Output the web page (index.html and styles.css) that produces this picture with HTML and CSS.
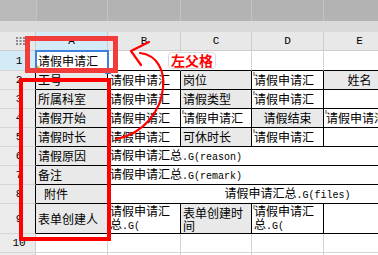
FILE: index.html
```html
<!DOCTYPE html>
<html lang="zh">
<head>
<meta charset="utf-8">
<title>sheet</title>
<link rel="stylesheet" href="styles.css">
</head>
<body>
<div class="page">
  <div class="topbar"><span class="tb0"></span><span class="tba"></span><span class="tbb"></span><span class="tbc"></span><span class="tbd"></span><span class="tbe"></span></div>
  <div class="band"></div>
  <table class="sheet">
    <colgroup>
      <col class="c-rh"><col class="c-a"><col class="c-b"><col class="c-c"><col class="c-d"><col class="c-e"><col class="c-f">
    </colgroup>
    <tr class="hdr">
      <th class="corner"><svg class="dots" width="10" height="8" viewBox="0 0 10 8"><rect x="0" y="0" width="2" height="2"/><rect x="3.5" y="0" width="2" height="2"/><rect x="7" y="0" width="2" height="2"/><rect x="0" y="3" width="2" height="2"/><rect x="3.5" y="3" width="2" height="2"/><rect x="7" y="3" width="2" height="2"/><rect x="0" y="6" width="2" height="2"/><rect x="3.5" y="6" width="2" height="2"/><rect x="7" y="6" width="2" height="2"/></svg></th>
      <th class="ch sel">A</th><th class="ch">B</th><th class="ch">C</th><th class="ch">D</th><th class="ch">E</th><th class="ch">F</th>
    </tr>
    <tr class="r1">
      <th class="rh sel">1</th>
      <td class="top">请假申请汇</td><td class="top"></td><td class="top"></td><td class="top"></td><td class="top"></td><td class="top"></td>
    </tr>
    <tr class="r">
      <th class="rh fl">2</th>
      <td class="f lab">工号</td><td class="f">请假申请汇</td><td class="f lab">岗位</td><td class="f v">请假申请汇</td><td class="f lab ctr">姓名</td><td class="f"></td>
    </tr>
    <tr class="r">
      <th class="rh fl">3</th>
      <td class="f lab">所属科室</td><td class="f">请假申请汇</td><td class="f lab">请假类型</td><td class="f v">请假申请汇</td><td class="f"></td><td class="f"></td>
    </tr>
    <tr class="r">
      <th class="rh fl">4</th>
      <td class="f lab">请假开始</td><td class="f">请假申请汇</td><td class="f v">请假申请汇</td><td class="f lab ctr">请假结束</td><td class="f v">请假申请汇</td><td class="f"></td>
    </tr>
    <tr class="r">
      <th class="rh fl">5</th>
      <td class="f lab">请假时长</td><td class="f">请假申请汇</td><td class="f lab">可休时长</td><td class="f v">请假申请汇</td><td class="f"></td><td class="f"></td>
    </tr>
    <tr class="r">
      <th class="rh fl">6</th>
      <td class="f lab">请假原因</td><td class="f" colspan="5">请假申请汇总<span class="m">.G(reason)</span></td>
    </tr>
    <tr class="r">
      <th class="rh fl">7</th>
      <td class="f lab">备注</td><td class="f" colspan="5">请假申请汇总<span class="m">.G(remark)</span></td>
    </tr>
    <tr class="r">
      <th class="rh fl">8</th>
      <td class="f lab indent">附件</td><td class="f v ctr" colspan="5">请假申请汇总<span class="m">.G(files)</span></td>
    </tr>
    <tr class="r9">
      <th class="rh fl">9</th>
      <td class="f lab">表单创建人</td><td class="f wrap">请假申请汇总<span class="m">.G(</span></td><td class="f lab wrap">表单创建时间</td><td class="f v wrap">请假申请汇总<span class="m">.G(</span></td><td class="f"></td><td class="f"></td>
    </tr>
    <tr class="r">
      <th class="rh">10</th>
      <td></td><td></td><td></td><td></td><td></td><td></td>
    </tr>
    <tr class="r">
      <th class="rh">11</th>
      <td></td><td></td><td></td><td></td><td></td><td></td>
    </tr>
  </table>

  <div class="selbox"></div>
  <div class="handle"></div>
  <div class="mark"></div>
  <div class="box1"></div>
  <div class="box2"></div>
  <svg class="arrow" width="378" height="255" viewBox="0 0 378 255">
    <path d="M140 53 C158 55 165 72 163 88 C161 110 145 133 117 139" fill="none" stroke="#f00" stroke-width="2.2" stroke-linecap="round"/>
    <path d="M149 42 L131 51 L141 65" fill="none" stroke="#f00" stroke-width="2.2" stroke-linecap="round" stroke-linejoin="round"/>
  </svg>
  <div class="tag">左父格</div>
</div>
</body>
</html>
```
FILE: styles.css
```css
* { box-sizing: border-box; }
html, body { margin: 0; padding: 0; overflow: hidden; background: #fff; }
.page {
  position: relative;
  width: 378px;
  height: 255px;
  overflow: hidden;
  font-family: "Noto Sans CJK SC", sans-serif;
  font-size: 12px;
  color: #000;
}
.topbar { display: flex; height: 21px; background: #b3b3b3; }
.topbar span { flex: none; height: 100%; border-right: 1px solid #c3c3c3; }
.tb0 { width: 37px; background: #b9b9b9; }
.tba { width: 71px; }
.tbb { width: 73px; }
.tbc { width: 71px; }
.tbd { width: 72px; }
.tbe { width: 72px; }
.band { height: 11px; background: #dadada; }

.sheet {
  table-layout: fixed;
  border-collapse: separate;
  border-spacing: 0;
  width: 468px;
}
.c-rh { width: 36px; }
.c-a { width: 72px; }
.c-b { width: 73px; }
.c-c { width: 71px; }
.c-d { width: 72px; }
.c-e { width: 72px; }
.c-f { width: 72px; }

.sheet th, .sheet td {
  padding: 0 2px;
  border-right: 1px solid #d4d4d4;
  border-bottom: 1px solid #d4d4d4;
  white-space: nowrap;
  overflow: hidden;
  text-align: left;
  vertical-align: middle;
  font-weight: normal;
  line-height: 14px;
  position: relative;
}
.hdr { height: 19px; }
.r1 { height: 20px; }
.r { height: 19px; }
.r9 { height: 30px; }

.sheet th.corner { background: #e8e8e8; border-color: #cdcdcd; text-align: center; padding: 0; }
.dots { display: block; margin: 0 auto 0 16px; fill: #8c8c8c; }
.sheet th.ch {
  background: #e8e8e8;
  border-right-color: #cdcdcd;
  border-bottom-color: #cdcdcd;
  text-align: center;
  font-family: "Liberation Mono", monospace;
  font-size: 11px;
}
.sheet th.rh {
  background: #ebebeb;
  border-right-color: #cdcdcd;
  border-bottom-color: #d6d6d6;
  text-align: center;
  padding: 0 0 0 3px;
  font-family: "Liberation Mono", monospace;
  font-size: 11px;
}
.sheet th.sel { background: #d2ebf6; }
.sheet th.rh.fl { border-right-color: #000; }

.sheet td.top { border-bottom-color: #000; }
.sheet td.f { border-right-color: #000; border-bottom-color: #000; }
.sheet td.lab { background: #e9e9e9; }
.sheet td.ctr { text-align: center; }
.sheet td.indent { padding-left: 8px; }
.sheet td.wrap { white-space: normal; line-height: 13px; }
.sheet td.v::before {
  content: "";
  position: absolute;
  left: 1px;
  top: 1px;
  width: 2px;
  height: 4px;
  background: #a8a8a8;
}
.m { font-family: "Liberation Mono", monospace; font-size: 10px; }

.selbox {
  position: absolute;
  left: 35px;
  top: 50px;
  width: 74px;
  height: 22px;
  border: 2px solid #3c7fe0;
}
.handle {
  position: absolute;
  left: 105px;
  top: 68px;
  width: 6px;
  height: 6px;
  background: #3c7fe0;
}
.mark {
  position: absolute;
  left: 37px;
  top: 65px;
  width: 0;
  height: 0;
  border-left: 4px solid #f0ac00;
  border-top: 4px solid transparent;
}
.box1 {
  position: absolute;
  left: 25px;
  top: 36px;
  width: 93px;
  height: 37px;
  border: 5px solid #f23c3c;
}
.box2 {
  position: absolute;
  left: 19px;
  top: 78px;
  width: 92px;
  height: 163px;
  border: 4px solid #ff0000;
}
.arrow { position: absolute; left: 0; top: 0; pointer-events: none; }
.tag {
  position: absolute;
  left: 168px;
  top: 52px;
  width: 48px;
  height: 17px;
  background: #fff;
  border: 1px solid #dcdcdc;
  border-radius: 4px;
  color: #ff0000;
  font-weight: 700;
  font-size: 14px;
  line-height: 15px;
  text-align: center;
}
```
